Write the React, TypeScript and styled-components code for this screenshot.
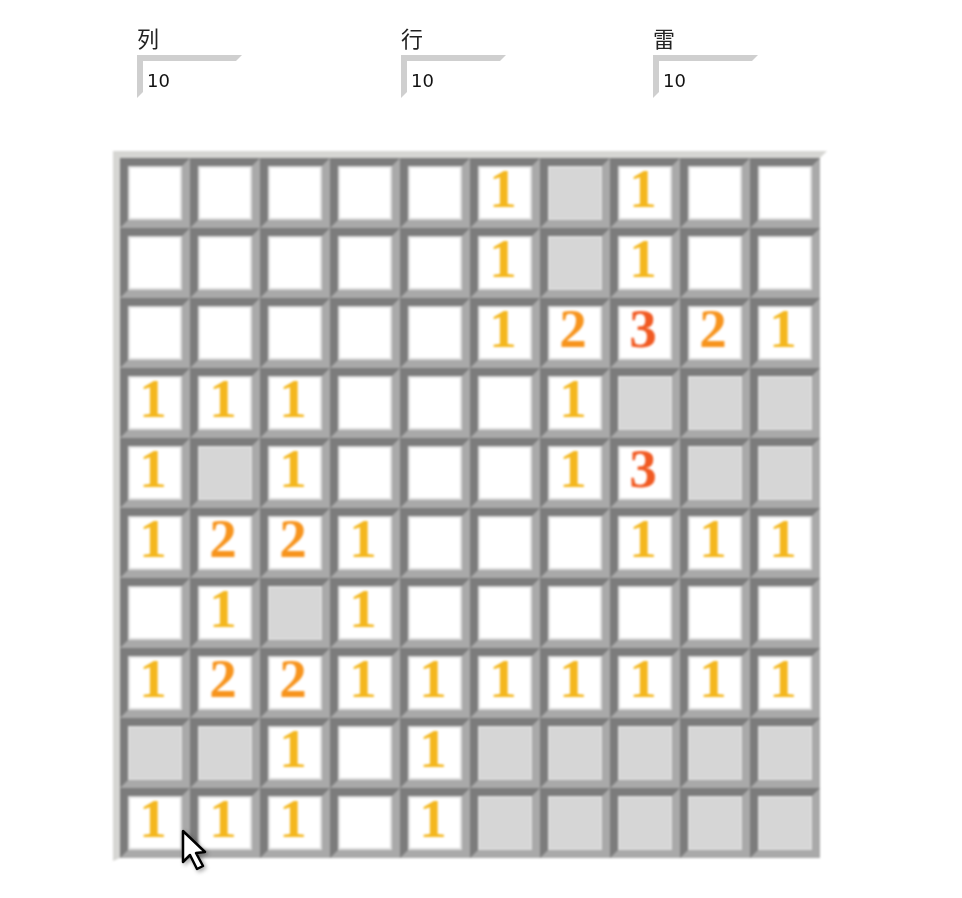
import React from 'react';
import styled, { createGlobalStyle } from 'styled-components';

const BOARD = [
  '.....1#1..',
  '.....1#1..',
  '.....12321',
  '111...1###',
  '1#1...13##',
  '1221...111',
  '.1#1......',
  '1221111111',
  '##1.1#####',
  '111.1#####',
];

const DIGIT_COLORS: Record<string, string> = {
  '1': '#f4b71e',
  '2': '#f7941d',
  '3': '#f15a22',
};

const Global = createGlobalStyle`
  html, body {
    margin: 0;
    padding: 0;
    background: #fff;
  }
`;

const Page = styled.div`
  position: relative;
  width: 962px;
  height: 898px;
  overflow: hidden;
  font-family: "DejaVu Sans", "Noto Sans CJK SC", sans-serif;
`;

const Controls = styled.div`
  display: grid;
  grid-template-columns: 264px 252px 105px;
  padding: 23px 0 0 137px;
  filter: blur(0.5px);
`;

const Field = styled.label`
  display: flex;
  flex-direction: column;
`;

const FieldLabel = styled.span`
  font-family: "Noto Sans CJK SC", sans-serif;
  font-size: 22px;
  line-height: 29px;
  margin-bottom: 3px;
  color: #222;
`;

const NumberInput = styled.input`
  box-sizing: border-box;
  width: 105px;
  height: 43px;
  padding: 7px 0 0 4px;
  border-style: solid;
  border-width: 6px;
  border-color: #cfcfcf #fff #fff #cfcfcf;
  outline: none;
  font-family: "DejaVu Sans", sans-serif;
  font-size: 18px;
  color: #111;
  background: #fff;
`;

const Board = styled.div`
  display: grid;
  grid-template-columns: repeat(10, 70px);
  grid-auto-rows: 70px;
  width: 700px;
  margin: 53px 0 0 113px;
  border-style: solid;
  border-width: 7px 7px 3px 7px;
  border-color: #d6d6d3 #fff #fff #d6d6d3;
  filter: blur(0.8px);
`;

const Cell = styled.div<{ $covered: boolean; $color?: string }>`
  box-sizing: border-box;
  display: flex;
  align-items: center;
  justify-content: center;
  padding: 0 4px 10px 0;
  border-style: solid;
  border-width: 8px;
  border-color: #7c7c7c #a9a9a9 #a9a9a9 #7c7c7c;
  box-shadow: inset 0 0 0 2px #dcdcdc;
  background: ${(p) => (p.$covered ? '#d6d6d6' : '#fff')};
  font-family: "Liberation Serif", serif;
  font-weight: bold;
  font-size: 55px;
  line-height: 1;
  color: ${(p) => p.$color || 'transparent'};
`;

const Cursor = styled.svg`
  position: absolute;
  left: 180px;
  top: 829px;
  width: 30px;
  height: 46px;
  filter: drop-shadow(2px 2px 2px rgba(0, 0, 0, 0.35));
`;

export default function App() {
  return (
    <Page>
      <Global />
      <Controls>
        {['列', '行', '雷'].map((name) => (
          <Field key={name}>
            <FieldLabel>{name}</FieldLabel>
            <NumberInput defaultValue="10" />
          </Field>
        ))}
      </Controls>
      <Board>
        {BOARD.join('').split('').map((c, i) => {
          const digit = c >= '1' && c <= '9';
          return (
            <Cell key={i} $covered={c === '#'} $color={DIGIT_COLORS[c]}>
              {digit ? c : ''}
            </Cell>
          );
        })}
      </Board>
      <Cursor viewBox="0 0 30 46">
        <path d="M3 2 L3 33 L10 26 L17 40 L23 37 L16 24 L25 23 Z" fill="#fff" stroke="#000" strokeWidth="2.5" strokeLinejoin="round" />
      </Cursor>
    </Page>
  );
}
